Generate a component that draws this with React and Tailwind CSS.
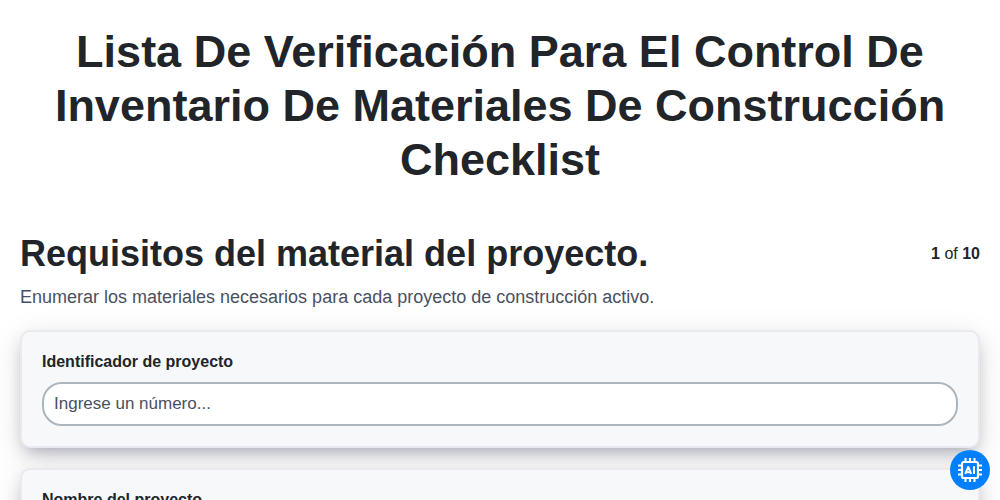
function AiChip() {
  return (
    <svg viewBox="0 0 24 24" className="size-6" fill="none" stroke="white" strokeWidth="2" aria-hidden="true">
      <rect x="4" y="4" width="16" height="16" rx="1.8" strokeWidth="2.2" />
      <path d="M7.5 0v4M12 0v4M16.5 0v4M7.5 20v4M12 20v4M16.5 20v4M0 7.5h4M0 12h4M0 16.5h4M20 7.5h4M20 12h4M20 16.5h4" strokeWidth="2.1" />
      <path d="M7.2 15.8l2.8-6.6h.4l2.8 6.6M8.4 14.2h3.6M16 8.2v7.8" />
    </svg>
  );
}

function Field({ id, label, placeholder }) {
  return (
    <div className="rounded-[10px] border-2 border-[#e9e9ef] bg-[#f6f8fa] p-5 shadow-[0_7px_29px_rgba(100,100,111,0.2),0_8px_16px_-6px_rgba(50,50,83,0.4)]">
      <label htmlFor={id} className="block text-base leading-5 font-bold">{label}</label>
      <input
        id={id}
        type="text"
        placeholder={placeholder}
        className="mt-2.5 block h-11 w-full rounded-[20px] border-2 border-[#adb5bd] bg-white px-2.5 text-[17px] placeholder:text-[#4a5060]"
      />
    </div>
  );
}

export default function App() {
  return (
    <div className="min-h-screen bg-white px-5 pb-5 font-['Liberation_Sans',Arial,sans-serif] text-[#212529]">
      <h1 className="pt-[25px] text-center text-[45px] leading-[54px] font-bold">
        Lista De Verificación Para El Control De Inventario De Materiales De Construcción Checklist
      </h1>
      <main className="mt-[45px]">
        <header className="flex items-center justify-between">
          <h2 className="text-4xl leading-[44px] font-bold">Requisitos del material del proyecto.</h2>
          <p className="text-base"><b>1</b> of <b>10</b></p>
        </header>
        <p className="mt-2 text-lg leading-[26px] text-[#4a5060]">
          Enumerar los materiales necesarios para cada proyecto de construcción activo.
        </p>
        <form className="mt-5 flex flex-col gap-5">
          <Field id="project-id" label="Identificador de proyecto" placeholder="Ingrese un número..." />
          <Field id="project-name" label="Nombre del proyecto" placeholder="Escriba algo..." />
        </form>
      </main>
      <button aria-label="AI" className="fixed right-2.5 bottom-2.5 flex size-10 items-center justify-center rounded-full bg-[#0080ff]">
        <AiChip />
      </button>
    </div>
  );
}
